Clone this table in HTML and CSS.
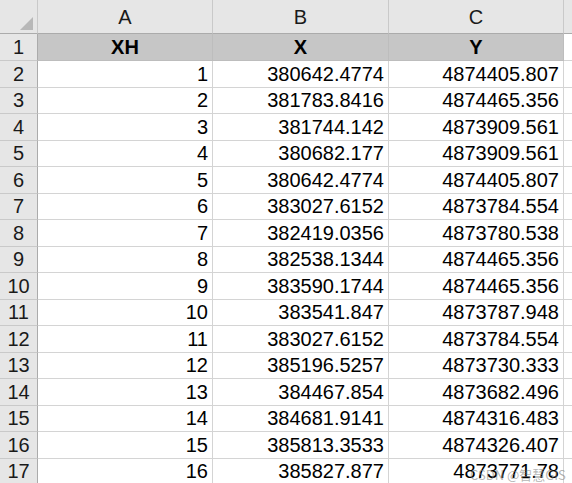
FILE: index.html
```html
<!DOCTYPE html>
<html>
<head>
<meta charset="utf-8">
<link rel="stylesheet" href="styles.css">
</head>
<body>
<div class="sheet">
  <div class="corner"><span class="tri"></span></div>
  <div class="colh">A</div><div class="colh">B</div><div class="colh">C</div><div class="colh end"></div>

  <div class="rowh r1">1</div><div class="cell hd">XH</div><div class="cell hd">X</div><div class="cell hd">Y</div><div class="cell r1 end"></div>

  <div class="rowh">2</div><div class="cell">1</div><div class="cell">380642.4774</div><div class="cell">4874405.807</div><div class="cell end"></div>
  <div class="rowh">3</div><div class="cell">2</div><div class="cell">381783.8416</div><div class="cell">4874465.356</div><div class="cell end"></div>
  <div class="rowh">4</div><div class="cell">3</div><div class="cell">381744.142</div><div class="cell">4873909.561</div><div class="cell end"></div>
  <div class="rowh">5</div><div class="cell">4</div><div class="cell">380682.177</div><div class="cell">4873909.561</div><div class="cell end"></div>
  <div class="rowh">6</div><div class="cell">5</div><div class="cell">380642.4774</div><div class="cell">4874405.807</div><div class="cell end"></div>
  <div class="rowh">7</div><div class="cell">6</div><div class="cell">383027.6152</div><div class="cell">4873784.554</div><div class="cell end"></div>
  <div class="rowh">8</div><div class="cell">7</div><div class="cell">382419.0356</div><div class="cell">4873780.538</div><div class="cell end"></div>
  <div class="rowh">9</div><div class="cell">8</div><div class="cell">382538.1344</div><div class="cell">4874465.356</div><div class="cell end"></div>
  <div class="rowh">10</div><div class="cell">9</div><div class="cell">383590.1744</div><div class="cell">4874465.356</div><div class="cell end"></div>
  <div class="rowh">11</div><div class="cell">10</div><div class="cell">383541.847</div><div class="cell">4873787.948</div><div class="cell end"></div>
  <div class="rowh">12</div><div class="cell">11</div><div class="cell">383027.6152</div><div class="cell">4873784.554</div><div class="cell end"></div>
  <div class="rowh">13</div><div class="cell">12</div><div class="cell">385196.5257</div><div class="cell">4873730.333</div><div class="cell end"></div>
  <div class="rowh">14</div><div class="cell">13</div><div class="cell">384467.854</div><div class="cell">4873682.496</div><div class="cell end"></div>
  <div class="rowh">15</div><div class="cell">14</div><div class="cell">384681.9141</div><div class="cell">4874316.483</div><div class="cell end"></div>
  <div class="rowh">16</div><div class="cell">15</div><div class="cell">385813.3533</div><div class="cell">4874326.407</div><div class="cell end"></div>
  <div class="rowh">17</div><div class="cell">16</div><div class="cell">385827.877</div><div class="cell">4873771.78</div><div class="cell end"></div>
  <div class="watermark">CSDN @智慧GIS</div>
</div>
</body>
</html>
```

FILE: styles.css
```css
html, body {
  margin: 0;
  padding: 0;
  background: #ffffff;
  overflow: hidden;
}
.sheet {
  position: relative;
  width: 572px;
  height: 483px;
  overflow: hidden;
  display: grid;
  grid-template-columns: 38px 175px 176px 175px 1fr;
  grid-template-rows: 34px 27px repeat(16, 26.5px);
  font-family: "Liberation Sans", Arial, sans-serif;
  font-size: 20px;
  color: #000;
}
.corner {
  position: relative;
  background: #e6e6e6;
  border-right: 1px solid #c9c9c9;
  border-bottom: 1px solid #ababab;
  box-sizing: border-box;
}
.tri {
  position: absolute;
  right: 4px;
  bottom: 3px;
  width: 0;
  height: 0;
  border-left: 13px solid transparent;
  border-bottom: 13px solid #b8b8b8;
}
.colh {
  background: #e6e6e6;
  border-right: 1px solid #c9c9c9;
  border-bottom: 1px solid #ababab;
  box-sizing: border-box;
  display: flex;
  align-items: center;
  justify-content: center;
  padding-top: 1px;
  color: #1a1a1a;
}
.rowh {
  background: #e6e6e6;
  border-right: 1px solid #ababab;
  border-bottom: 1px solid #c9c9c9;
  box-sizing: border-box;
  display: flex;
  align-items: center;
  justify-content: center;
  color: #1a1a1a;
  padding-top: 1px;
}
.cell {
  border-right: 1px solid #d4d4d4;
  border-bottom: 1px solid #d4d4d4;
  box-sizing: border-box;
  display: flex;
  align-items: center;
  justify-content: flex-end;
  padding-right: 4px;
  padding-top: 1px;
  white-space: nowrap;
}
.cell.hd {
  background: #c6c6c6;
  justify-content: center;
  font-weight: bold;
  padding-right: 0;
  border-right-color: #bdbdbd;
  border-bottom-color: #bdbdbd;
}
.end {
  border-right: none;
}
.watermark {
  position: absolute;
  left: 470px;
  top: 465px;
  font-family: "Noto Sans CJK SC", "Liberation Sans", sans-serif;
  font-size: 13px;
  color: rgba(130, 130, 130, 0.6);
  white-space: nowrap;
}
```
